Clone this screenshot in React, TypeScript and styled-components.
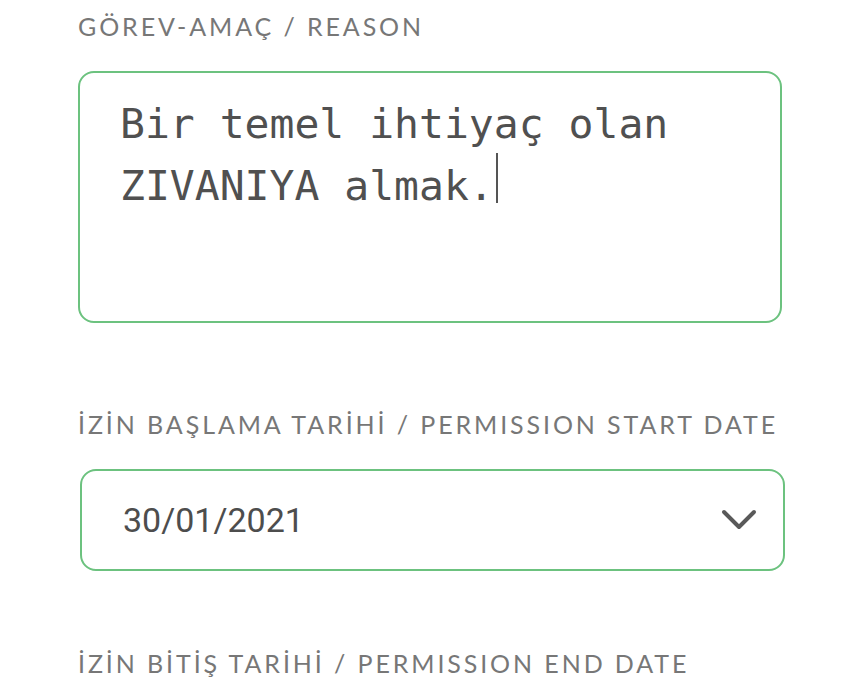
import React from 'react';
import styled, { createGlobalStyle } from 'styled-components';

const GlobalStyle = createGlobalStyle`
  html, body {
    margin: 0;
    padding: 0;
    background: #ffffff;
  }
  * {
    box-sizing: border-box;
  }
`;

const Page = styled.div`
  padding: 11px 84px 0 78px;
  width: 866px;
  height: 689px;
  overflow: hidden;
  background: #ffffff;
`;

const Field = styled.div<{ $gap: number }>`
  display: flex;
  flex-direction: column;
  margin-bottom: ${p => p.$gap}px;
`;

const Label = styled.div`
  font-family: Lato, 'Noto Sans', sans-serif;
  font-size: 25px;
  line-height: 30px;
  letter-spacing: 2.9px;
  color: #777777;
  text-transform: uppercase;
  white-space: nowrap;
  margin-bottom: 30px;
`;

const TextArea = styled.div`
  width: 704px;
  height: 252px;
  border: 2px solid #6cc27f;
  border-radius: 16px;
  padding: 22px 40px;
  font-family: 'DejaVu Sans Mono', 'Liberation Mono', monospace;
  font-size: 41.4px;
  line-height: 58px;
  color: #505050;
`;

const Caret = styled.span`
  display: inline-block;
  width: 2px;
  height: 50px;
  margin-left: 2px;
  background: #555555;
  vertical-align: -3px;
`;

const Select = styled.div`
  width: 705px;
  height: 102px;
  margin-left: 2px;
  border: 2px solid #6cc27f;
  border-radius: 16px;
  padding: 0 26px 0 41px;
  display: flex;
  align-items: center;
  justify-content: space-between;
`;

const SelectValue = styled.span`
  font-family: Roboto, 'Liberation Sans', sans-serif;
  font-size: 34px;
  color: #4d4d4d;
`;

const Chevron = () => (
  <svg width="36" height="24" viewBox="0 0 36 24" fill="none">
    <polyline
      points="3,4 18,19 33,4"
      stroke="#595959"
      strokeWidth="4"
      strokeLinecap="round"
      strokeLinejoin="round"
    />
  </svg>
);

export default function App() {
  return (
    <>
      <GlobalStyle />
      <Page>
        <Field $gap={86}>
          <Label>GÖREV-AMAÇ / REASON</Label>
          <TextArea>
            Bir temel ihtiyaç olan ZIVANIYA almak.<Caret />
          </TextArea>
        </Field>
        <Field $gap={77}>
          <Label>İZİN BAŞLAMA TARİHİ / PERMISSION START DATE</Label>
          <Select>
            <SelectValue>30/01/2021</SelectValue>
            <Chevron />
          </Select>
        </Field>
        <Field $gap={0}>
          <Label>İZİN BİTİŞ TARİHİ / PERMISSION END DATE</Label>
        </Field>
      </Page>
    </>
  );
}
